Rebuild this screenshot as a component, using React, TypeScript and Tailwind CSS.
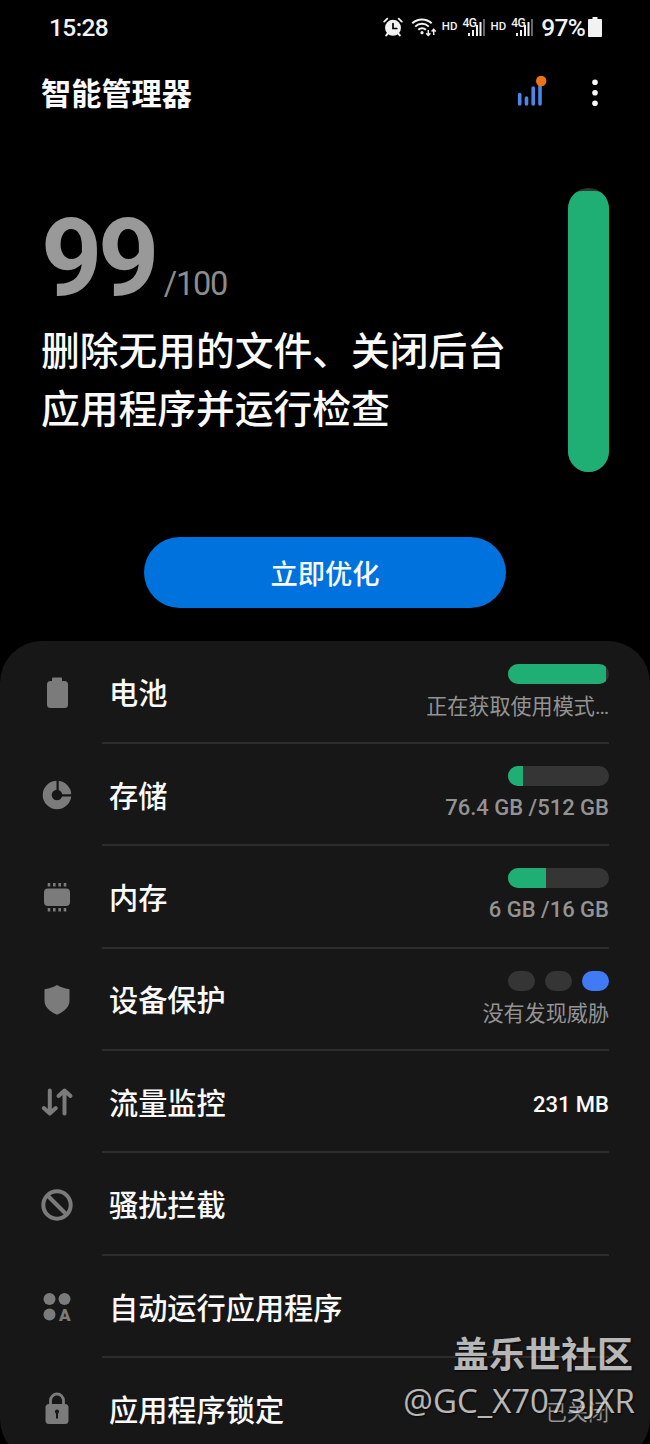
import type { ReactNode } from "react";
import clsx from "clsx";

type Row = {
  icon: ReactNode
  title: string
  bar?: number
  dots?: boolean
  info?: string
  highlight?: boolean
}

const BatteryIcon = () => (
  <svg viewBox="0 0 36 36" className="size-9" fill="currentColor">
    <path d="M14 2.500h8a1 1 0 0 1 1 1V6h2.500a3.500 3.500 0 0 1 3.500 3.500v20a3.500 3.500 0 0 1-3.500 3.500H11.500a3.500 3.500 0 0 1-3.500-3.500v-20A3.500 3.500 0 0 1 11.500 6h1.500V3.500a1 1 0 0 1 1-1z" />
  </svg>
)

const StorageIcon = () => (
  <svg viewBox="0 0 36 36" className="size-9">
    <circle cx="18" cy="18" r="9.8" fill="none" stroke="currentColor" strokeWidth="9" />
    <path d="M18.600 2v15.600M18.600 18.300H34" stroke="#171717" strokeWidth="2.200" />
  </svg>
)

const MemoryIcon = () => (
  <svg viewBox="0 0 36 36" className="size-9" fill="currentColor">
    <rect x="5" y="9.500" width="26" height="17.500" rx="4" />
    <path d="M10 4v3.500M15.300 4v3.500M20.700 4v3.500M26 4v3.500M10 29v3.500M15.300 29v3.500M20.700 29v3.500M26 29v3.500" stroke="currentColor" strokeWidth="2.600" />
  </svg>
)

const ShieldIcon = () => (
  <svg viewBox="0 0 36 36" className="size-9" fill="currentColor">
    <path d="M18 3c3.500 2.200 7.500 3.400 11.500 4a1 1 0 0 1 1 1v10.500c0 6.500-5 11-12.500 14.300C10.500 29.500 5.500 25 5.500 18.500V8a1 1 0 0 1 1-1C10.500 6.400 14.500 5.200 18 3z" />
  </svg>
)

const DataIcon = () => (
  <svg viewBox="0 0 36 36" className="size-9" fill="none" stroke="currentColor" strokeWidth="4" strokeLinecap="round" strokeLinejoin="round">
    <path d="M10.800 6.500v22M4.800 24l6 5.500 6-5.500M25.500 29.500v-22M19.500 12l6-5.500 6 5.500" />
  </svg>
)

const BlockIcon = () => (
  <svg viewBox="0 0 36 36" className="size-9" fill="none" stroke="currentColor" strokeWidth="4">
    <circle cx="18" cy="18" r="13.700" />
    <path d="M8.500 8.500l19 19" />
  </svg>
)

const AutoRunIcon = () => (
  <svg viewBox="0 0 36 36" className="size-9" fill="currentColor">
    <circle cx="10.500" cy="10" r="6" />
    <circle cx="25.500" cy="10" r="6" />
    <circle cx="10.500" cy="25.500" r="6" />
    <text x="25.700" y="31.500" textAnchor="middle" fontFamily="Roboto, sans-serif" fontSize="17" fontWeight="900">A</text>
  </svg>
)

const LockIcon = () => (
  <svg viewBox="0 0 36 36" className="size-9">
    <path d="M11.500 15V9.500a6.500 6.500 0 0 1 13 0V15" fill="none" stroke="currentColor" strokeWidth="2.800" />
    <rect x="6.500" y="13" width="23" height="20" rx="3.500" fill="currentColor" />
    <circle cx="18" cy="20.700" r="2.100" fill="#171717" />
    <path d="M18 21v6.500" stroke="#171717" strokeWidth="2" />
  </svg>
)

const AlarmIcon = () => (
  <svg viewBox="0 0 20 20" className="h-5 w-5" fill="none" stroke="#f2f2f2" strokeLinecap="round">
    <circle cx="10" cy="10.800" r="8" fill="#f2f2f2" stroke="none" />
    <path d="M1.200 4.600L4.300 1.700M18.800 4.600L15.700 1.700" strokeWidth="1.800" />
    <path d="M4.800 16.500L3.200 18.400M15.200 16.500l1.600 1.900" strokeWidth="2" />
    <path d="M10 6.500v5h3.800" stroke="#000" strokeWidth="1.700" />
  </svg>
)

const WifiIcon = () => (
  <svg viewBox="0 0 26 20" className="h-5 w-[26px]" fill="none" stroke="#f2f2f2" strokeWidth="2">
    <path d="M1.300 6.300a14 14 0 0 1 19.400 0M4.200 9.600a9.700 9.700 0 0 1 13.600 0M7.300 12.800a5.400 5.400 0 0 1 7.600 0" />
    <circle cx="11" cy="15.700" r="1.600" fill="#f2f2f2" stroke="none" />
    <path d="M17.300 13v5M15.200 16.200l2.100 2.200 2.100-2.200M22.700 18v-5M20.600 14.600l2.100-2.200 2.100 2.200" strokeWidth="1.500" />
  </svg>
)

const Signal = () => (
  <div className="relative h-6 w-[22px]">
    <svg viewBox="0 0 22 24" className="h-6 w-[22px]" strokeWidth="2">
      <path d="M6 21v-3M10 21v-6M14 21V10M17.500 21V7" stroke="#f2f2f2" />
      <path d="M21 21V4" stroke="#666" />
    </svg>
    <span className="absolute top-[3px] left-0 text-[12px] leading-[10px] font-medium tracking-[-0.5px]">4G</span>
  </div>
)

const ROWS: Row[] = [
  { icon: <BatteryIcon />, title: "电池", bar: 97.5, info: "正在获取使用模式…" },
  { icon: <StorageIcon />, title: "存储", bar: 15, info: "76.4 GB /512 GB" },
  { icon: <MemoryIcon />, title: "内存", bar: 37.5, info: "6 GB /16 GB" },
  { icon: <ShieldIcon />, title: "设备保护", dots: true, info: "没有发现威胁" },
  { icon: <DataIcon />, title: "流量监控", info: "231 MB", highlight: true },
  { icon: <BlockIcon />, title: "骚扰拦截" },
  { icon: <AutoRunIcon />, title: "自动运行应用程序" },
  { icon: <LockIcon />, title: "应用程序锁定", info: "已关闭" },
]

const MenuRow = ({ icon, title, bar, dots, info, highlight }: Row) => {
  const latin = info !== undefined && /GB|MB/.test(info)

  return (
    <li className="group flex h-[102.4px] pl-[39px]">
      <div className="flex w-[63px] items-center text-[#7b7b7b]">{icon}</div>
      <div className="mr-[41px] flex flex-1 items-center justify-between border-b-2 border-[#2d2d2d] pl-[7px] group-last:border-transparent">
        <h2 className="pt-[5px] text-[29.2px] leading-10 font-medium whitespace-nowrap text-[#fafafa]">{title}</h2>
        <div className="flex flex-col items-end pt-[2px]">
          {bar !== undefined && (
            <div className="h-5 w-[101px] overflow-hidden rounded-full bg-[#353535]">
              <div className="h-full bg-[#1faf74]" style={{ width: `${bar}%` }} />
            </div>
          )}
          {dots && (
            <div className="flex gap-[10px]">
              <span className="h-5 w-[27px] rounded-full bg-[#353535]" />
              <span className="h-5 w-[27px] rounded-full bg-[#353535]" />
              <span className="h-5 w-[27px] rounded-full bg-[#417af5]" />
            </div>
          )}
          {info && (
            <p
              className={clsx(
                "leading-[30px] whitespace-nowrap",
                latin ? "mt-[7px] mb-px text-[22px] font-medium" : "mt-2 text-[21.1px]",
                highlight ? "text-[#fafafa]" : "text-[#939393]"
              )}
            >
              {info}
            </p>
          )}
        </div>
      </div>
    </li>
  )
}

const App = () => {
  return (
    <main className="relative flex h-[1444px] w-[650px] flex-col overflow-hidden bg-black font-[Roboto,'Noto_Sans_CJK_SC',sans-serif] text-[#fafafa]">
      <header className="flex h-[54px] shrink-0 items-center justify-between pr-[48px] pl-[49px] text-[#f2f2f2]">
        <span className="pt-0.5 text-[24.500px] font-medium tracking-[-0.600px]">15:28</span>
        <div className="flex items-center">
          <AlarmIcon />
          <div className="ml-2"><WifiIcon /></div>
          <span className="ml-[5px] text-[11.500px] font-medium">HD</span>
          <div className="ml-[5px]"><Signal /></div>
          <span className="ml-[6px] text-[11.500px] font-medium">HD</span>
          <div className="ml-[5px]"><Signal /></div>
          <span className="ml-2 pt-0.5 text-[24.500px] font-medium tracking-[-0.700px]">97%</span>
          <svg viewBox="0 0 14 20" className="ml-[3px] h-5 w-3.5" fill="#f2f2f2">
            <path d="M4.500 0h5v2H13a1 1 0 0 1 1 1v16a1 1 0 0 1-1 1H1a1 1 0 0 1-1-1V3a1 1 0 0 1 1-1h3.500z" />
          </svg>
        </div>
      </header>

      <nav className="flex h-[78px] shrink-0 items-center justify-between pr-[50px] pl-[41px]">
        <h1 className="pt-[3px] text-[30.200px] leading-10 font-bold">智能管理器</h1>
        <div className="flex items-center gap-[42.500px]">
          <svg viewBox="0 0 32 34" className="h-[34px] w-8">
            <path d="M3.700 18.500v9.500M10.500 22V28M17.200 12v16M24 9v19" stroke="#4a88e8" strokeWidth="3.600" strokeLinecap="round" />
            <circle cx="25.200" cy="5" r="5.200" fill="#ee7217" />
          </svg>
          <svg viewBox="0 0 10 34" className="h-[34px] w-2.5" fill="#fafafa">
            <circle cx="5" cy="6.200" r="2.800" />
            <circle cx="5" cy="16.700" r="2.800" />
            <circle cx="5" cy="27.200" r="2.800" />
          </svg>
        </div>
      </nav>

      <section className="flex h-[340px] shrink-0 justify-between pt-[56px] pr-[41px] pl-[41px]">
        <div>
          <div className="flex items-baseline pt-[11px] text-[#999]">
            <span className="text-[107px] leading-[120px] font-bold tracking-[-4.500px]">99</span>
            <span className="ml-[9px] text-[32.500px] tracking-[-1.200px] text-[#8c8c8c]">/100</span>
          </div>
          <p className="mt-1 text-[38.750px] leading-[58px] font-medium">删除无用的文件、关闭后台<br />应用程序并运行检查</p>
        </div>
        <div className="h-[284px] w-[41px] overflow-hidden rounded-full bg-[#353535] pt-[3px]">
          <div className="h-full rounded-t-[14px] bg-[#1faf74]" />
        </div>
      </section>

      <div className="flex shrink-0 justify-center pt-[65px]">
        <button className="h-[71px] w-[362px] rounded-full bg-[#0072de] pt-[5px] text-[27.300px] font-medium">立即优化</button>
      </div>

      <ul className="mt-[33px] shrink-0 rounded-[42px] bg-[#171717] pt-[0.500px]">
        {ROWS.map((row) => (
          <MenuRow key={row.title} {...row} />
        ))}
      </ul>

      {/* community signature, over the last rows */}
      <div className="absolute right-[15px] bottom-[23px] flex flex-col items-end text-[#e0e0e0] opacity-80 [text-shadow:1px_1px_2px_#000]">
        <span className="mr-0.5 text-[36px] leading-[49px] font-bold">盖乐世社区</span>
        <span className="font-['Open_Sans',sans-serif] text-[33px] leading-[40px]">@GC_X7073JXR</span>
      </div>
    </main>
  )
}

export default App
